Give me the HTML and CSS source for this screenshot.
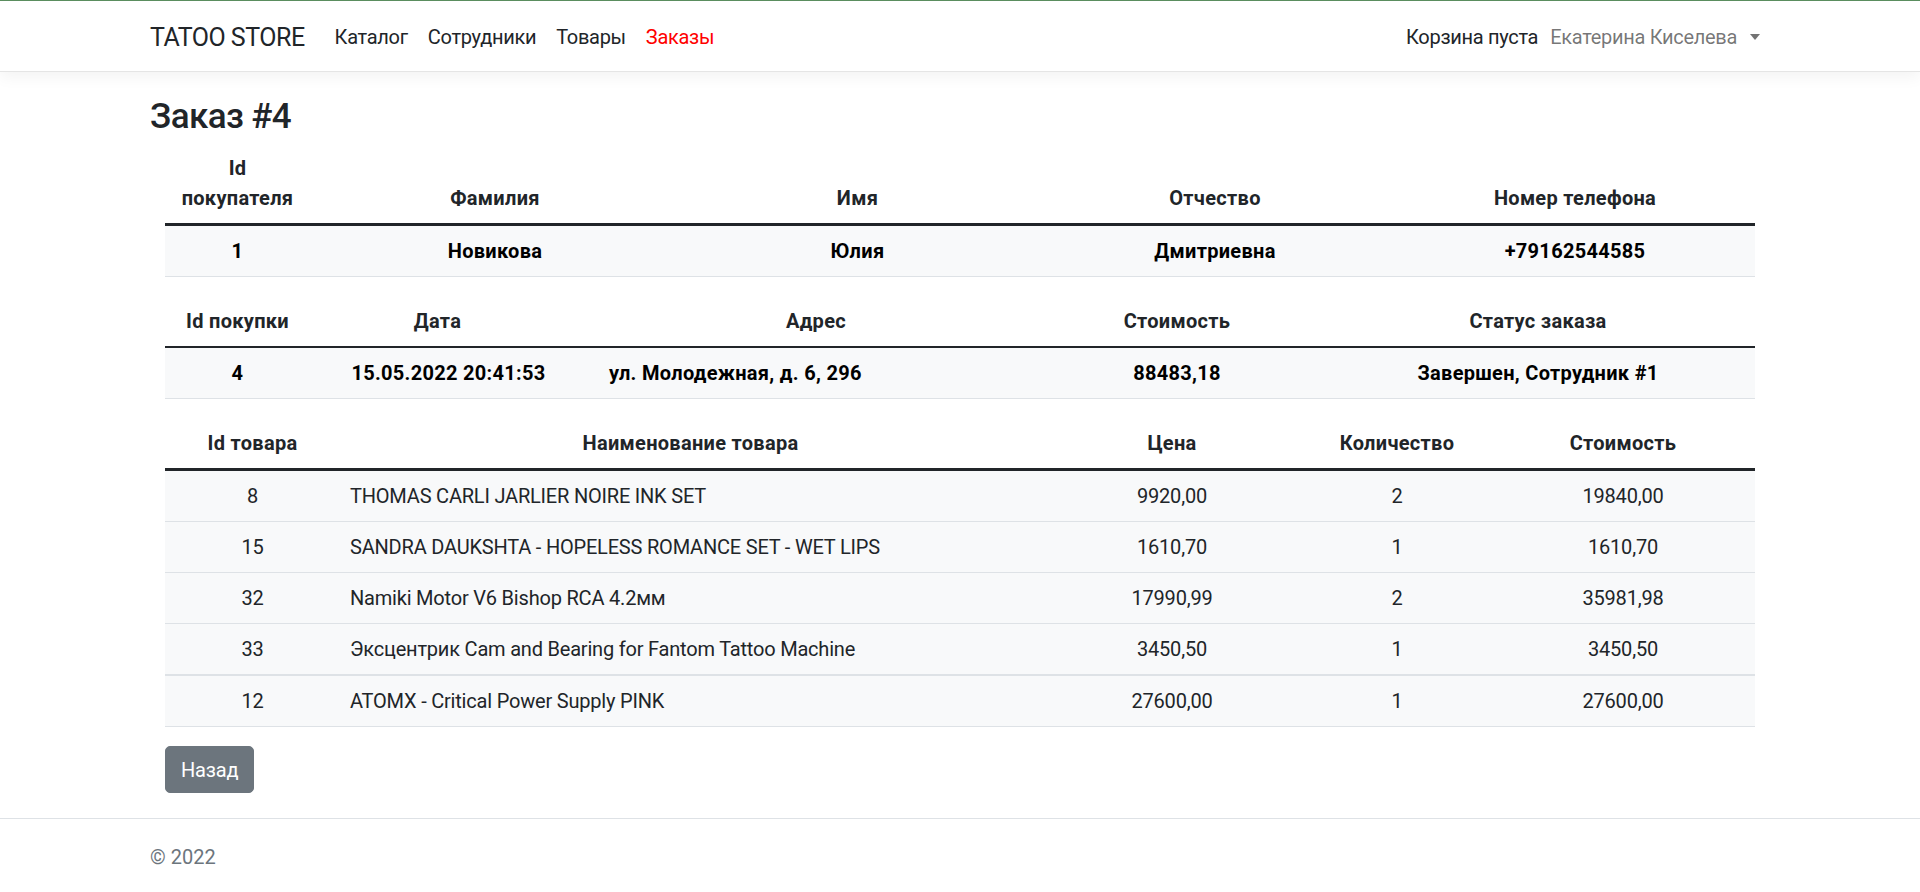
FILE: index.html
```html
<!DOCTYPE html>
<html lang="ru">
<head>
<meta charset="utf-8">
<title>Заказ #4 - TATOO STORE</title>
<link rel="stylesheet" href="styles.css">
</head>
<body>
<header class="navbar">
  <div class="container nav-inner">
    <a class="brand" href="#">TATOO STORE</a>
    <ul class="nav-links">
      <li><a class="nav-link" href="#">Каталог</a></li>
      <li><a class="nav-link" href="#">Сотрудники</a></li>
      <li><a class="nav-link" href="#">Товары</a></li>
      <li><a class="nav-link active" href="#">Заказы</a></li>
    </ul>
    <div class="nav-right">
      <span class="cart">Корзина пуста</span>
      <a class="user" href="#">Екатерина Киселева<span class="caret"></span></a>
    </div>
  </div>
</header>

<main class="container main">
  <h3 class="title">Заказ #4</h3>
  <div class="tables">
    <table class="tbl t1">
      <colgroup><col class="w145"><col class="w370"><col class="w355"><col class="w360"><col class="w360"></colgroup>
      <thead>
        <tr><th>Id<br>покупателя</th><th>Фамилия</th><th>Имя</th><th>Отчество</th><th>Номер телефона</th></tr>
      </thead>
      <tbody>
        <tr class="bold"><td>1</td><td>Новикова</td><td>Юлия</td><td>Дмитриевна</td><td>+79162544585</td></tr>
      </tbody>
    </table>

    <table class="tbl t2">
      <colgroup><col class="w145"><col class="w255"><col class="w468"><col class="w288"><col class="w434"></colgroup>
      <thead>
        <tr><th>Id покупки</th><th>Дата</th><th class="shift-addr">Адрес</th><th>Стоимость</th><th>Статус заказа</th></tr>
      </thead>
      <tbody>
        <tr class="bold"><td>4</td><td class="shift-date">15.05.2022 20:41:53</td><td class="left addr">ул. Молодежная, д. 6, 296</td><td>88483,18</td><td>Завершен, Сотрудник #1</td></tr>
      </tbody>
    </table>

    <table class="tbl t3">
      <colgroup><col class="w175"><col class="w701"><col class="w262"><col class="w188"><col class="w264"></colgroup>
      <thead>
        <tr><th>Id товара</th><th>Наименование товара</th><th>Цена</th><th>Количество</th><th>Стоимость</th></tr>
      </thead>
      <tbody>
        <tr><td>8</td><td class="left">THOMAS CARLI JARLIER NOIRE INK SET</td><td>9920,00</td><td>2</td><td>19840,00</td></tr>
        <tr><td>15</td><td class="left">SANDRA DAUKSHTA - HOPELESS ROMANCE SET - WET LIPS</td><td>1610,70</td><td>1</td><td>1610,70</td></tr>
        <tr><td>32</td><td class="left">Namiki Motor V6 Bishop RCA 4.2мм</td><td>17990,99</td><td>2</td><td>35981,98</td></tr>
        <tr class="thick"><td>33</td><td class="left">Эксцентрик Cam and Bearing for Fantom Tattoo Machine</td><td>3450,50</td><td>1</td><td>3450,50</td></tr>
        <tr><td>12</td><td class="left">ATOMX - Critical Power Supply PINK</td><td>27600,00</td><td>1</td><td>27600,00</td></tr>
      </tbody>
    </table>

    <a class="btn" href="#">Назад</a>
  </div>
</main>

<footer class="footer">
  <div class="container">© 2022</div>
</footer>
</body>
</html>
```

FILE: styles.css
```css
* { box-sizing: border-box; }

html, body {
  margin: 0;
  padding: 0;
}

body {
  font-family: Roboto, "Segoe UI", "Noto Sans", sans-serif;
  font-size: 20px;
  line-height: 30px;
  color: #212529;
  background: #fff;
}

a { text-decoration: none; color: inherit; }

.container {
  width: 1620px;
  margin: 0 auto;
}

/* navbar */
.navbar {
  height: 72px;
  border-top: 1px solid #5a8d5e;
  border-bottom: 1px solid #e5e5e5;
  box-shadow: 0 5px 15px rgba(0, 0, 0, 0.05);
  background: #fff;
  letter-spacing: -0.3px;
}

.nav-inner {
  display: flex;
  align-items: center;
  height: 100%;
  padding-top: 2px;
}

.brand {
  font-size: 25px;
  line-height: 37px;
  color: #212529;
  margin-right: 20px;
  letter-spacing: -0.5px;
}

.nav-links {
  display: flex;
  list-style: none;
  margin: 0;
  padding: 0;
}

.nav-link {
  display: block;
  padding: 0 10px;
  color: #212529;
}

.nav-link.active {
  color: #ff0000;
}

.nav-right {
  margin-left: auto;
  display: flex;
  align-items: center;
}

.cart {
  color: #212529;
}

.user {
  display: flex;
  align-items: center;
  color: rgba(0, 0, 0, 0.55);
  padding: 0 10px 0 12px;
}

.caret {
  width: 0;
  height: 0;
  border-left: 5px solid transparent;
  border-right: 5px solid transparent;
  border-top: 6px solid currentColor;
  margin-left: 13px;
}

/* main */
.main {
  padding-top: 24px;
  padding-bottom: 25px;
}

.title {
  font-size: 35px;
  line-height: 42px;
  font-weight: 500;
  letter-spacing: -0.6px;
  margin: 0 0 5px;
}

.tables {
  padding: 0 15px;
}

.tbl {
  width: 100%;
  border-collapse: collapse;
  table-layout: fixed;
  margin-bottom: 19px;
}

.tbl th,
.tbl td {
  padding: 10px;
  text-align: center;
  border-bottom: 1px solid #dee2e6;
  font-weight: 400;
  letter-spacing: -0.2px;
}

.tbl thead th {
  font-weight: 700;
  letter-spacing: 0.3px;
  vertical-align: bottom;
  border-bottom: 3px solid #212529;
}

.t2 thead th {
  border-bottom-width: 2px;
}

.tbl tbody tr {
  background: #f8f9fa;
}

.tbl tr.bold td {
  font-weight: 700;
  letter-spacing: 0.3px;
  color: #000;
}

.tbl tr.thick td {
  border-bottom-width: 2px;
}

.tbl td.left {
  text-align: left;
}

.tbl .shift-date {
  padding-left: 32px;
}

.tbl .shift-addr {
  padding-left: 44px;
}

.tbl td.addr {
  padding-left: 44px;
}

.w145 { width: 145px; }
.w175 { width: 175px; }
.w188 { width: 188px; }
.w255 { width: 255px; }
.w262 { width: 262px; }
.w264 { width: 264px; }
.w288 { width: 288px; }
.w355 { width: 355px; }
.w360 { width: 360px; }
.w370 { width: 370px; }
.w434 { width: 434px; }
.w468 { width: 468px; }
.w701 { width: 701px; }

.btn {
  display: inline-block;
  background: #6c757d;
  border: 1px solid #6c757d;
  color: #fff;
  padding: 7.5px 15px;
  line-height: 30px;
  border-radius: 5px;
  letter-spacing: -0.2px;
}

/* footer */
.footer {
  border-top: 1px solid #dee2e6;
  padding-top: 2px;
  line-height: 73px;
  color: #6c757d;
}
```
